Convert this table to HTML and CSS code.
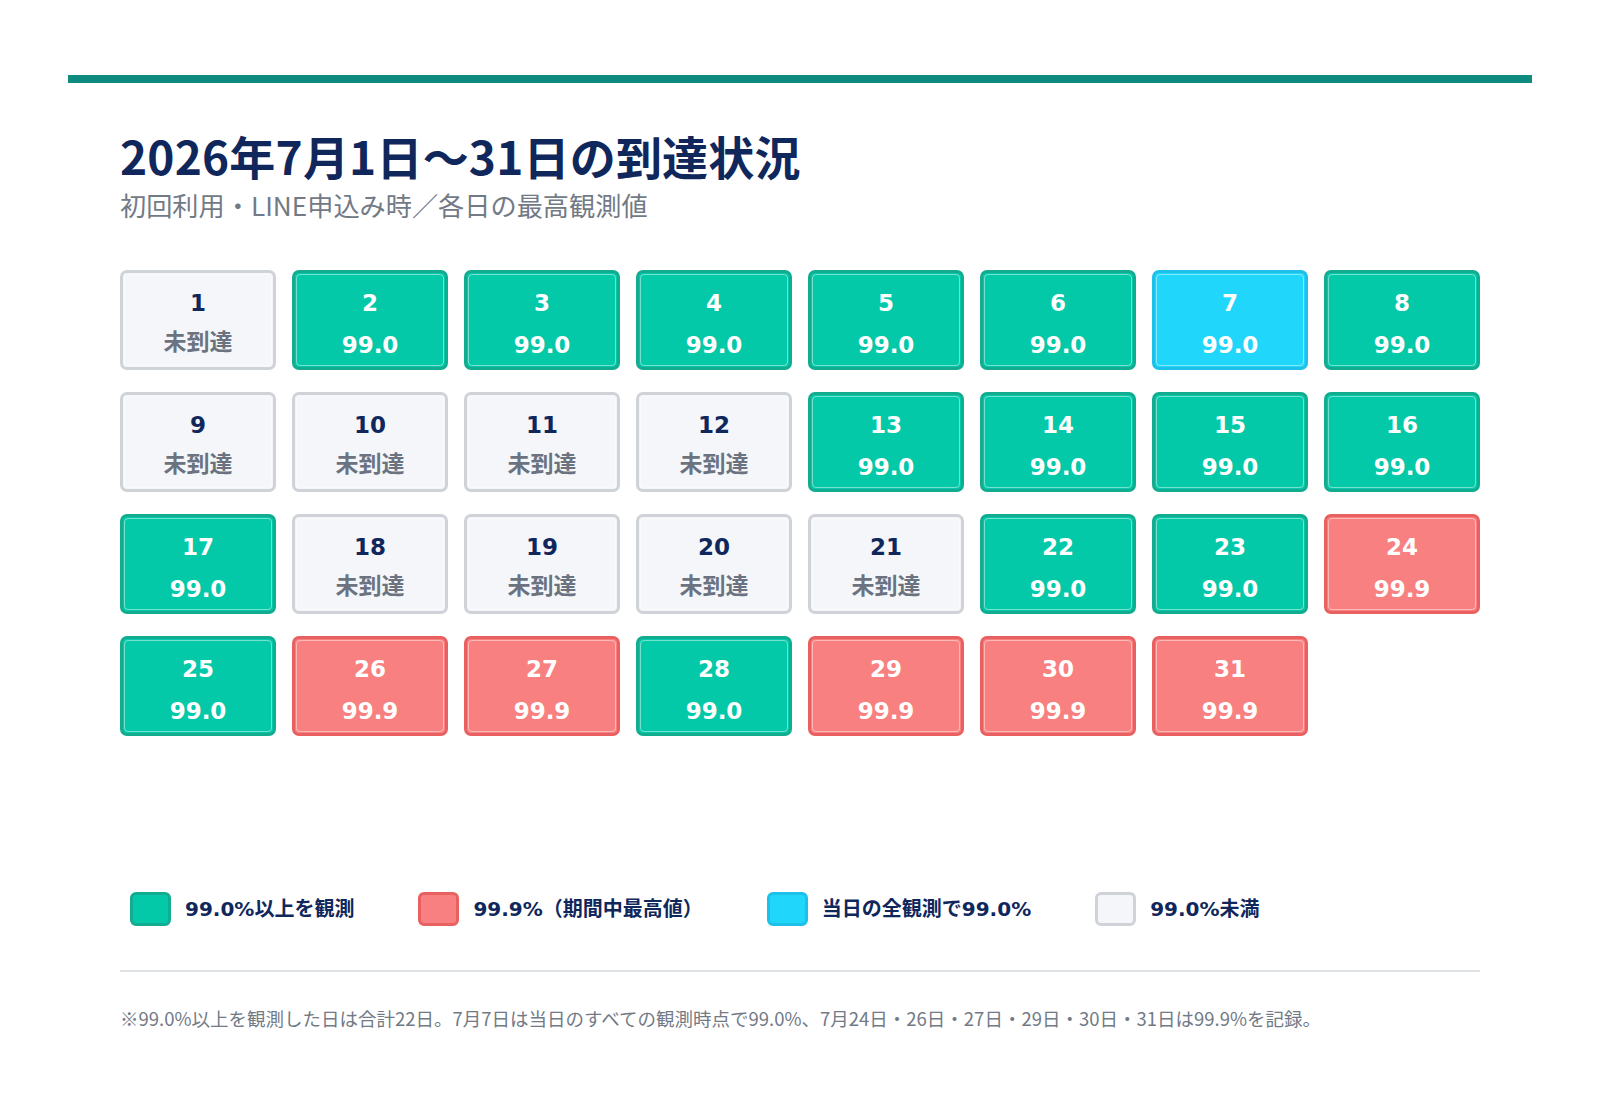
FILE: index.html
```html
<!DOCTYPE html>
<html lang="ja">
<head>
<meta charset="utf-8">
<title>2026年7月1日〜31日の到達状況</title>
<link rel="stylesheet" href="styles.css">
</head>
<body>
<div class="page">
  <div class="bar"></div>
  <div class="content">
    <h1 class="title">2026年7月1日〜31日の到達状況</h1>
    <p class="subtitle">初回利用・LINE申込み時／各日の最高観測値</p>

    <div class="grid">
      <div class="card none"><span class="day">1</span><span class="val">未到達</span></div>
      <div class="card ok"><span class="day">2</span><span class="val">99.0</span></div>
      <div class="card ok"><span class="day">3</span><span class="val">99.0</span></div>
      <div class="card ok"><span class="day">4</span><span class="val">99.0</span></div>
      <div class="card ok"><span class="day">5</span><span class="val">99.0</span></div>
      <div class="card ok"><span class="day">6</span><span class="val">99.0</span></div>
      <div class="card all"><span class="day">7</span><span class="val">99.0</span></div>
      <div class="card ok"><span class="day">8</span><span class="val">99.0</span></div>

      <div class="card none"><span class="day">9</span><span class="val">未到達</span></div>
      <div class="card none"><span class="day">10</span><span class="val">未到達</span></div>
      <div class="card none"><span class="day">11</span><span class="val">未到達</span></div>
      <div class="card none"><span class="day">12</span><span class="val">未到達</span></div>
      <div class="card ok"><span class="day">13</span><span class="val">99.0</span></div>
      <div class="card ok"><span class="day">14</span><span class="val">99.0</span></div>
      <div class="card ok"><span class="day">15</span><span class="val">99.0</span></div>
      <div class="card ok"><span class="day">16</span><span class="val">99.0</span></div>

      <div class="card ok"><span class="day">17</span><span class="val">99.0</span></div>
      <div class="card none"><span class="day">18</span><span class="val">未到達</span></div>
      <div class="card none"><span class="day">19</span><span class="val">未到達</span></div>
      <div class="card none"><span class="day">20</span><span class="val">未到達</span></div>
      <div class="card none"><span class="day">21</span><span class="val">未到達</span></div>
      <div class="card ok"><span class="day">22</span><span class="val">99.0</span></div>
      <div class="card ok"><span class="day">23</span><span class="val">99.0</span></div>
      <div class="card max"><span class="day">24</span><span class="val">99.9</span></div>

      <div class="card ok"><span class="day">25</span><span class="val">99.0</span></div>
      <div class="card max"><span class="day">26</span><span class="val">99.9</span></div>
      <div class="card max"><span class="day">27</span><span class="val">99.9</span></div>
      <div class="card ok"><span class="day">28</span><span class="val">99.0</span></div>
      <div class="card max"><span class="day">29</span><span class="val">99.9</span></div>
      <div class="card max"><span class="day">30</span><span class="val">99.9</span></div>
      <div class="card max"><span class="day">31</span><span class="val">99.9</span></div>
    </div>

    <div class="legend">
      <div class="legend-item"><span class="swatch ok"></span><span class="legend-text">99.0%以上を観測</span></div>
      <div class="legend-item"><span class="swatch max"></span><span class="legend-text">99.9%（期間中最高値）</span></div>
      <div class="legend-item"><span class="swatch all"></span><span class="legend-text">当日の全観測で99.0%</span></div>
      <div class="legend-item"><span class="swatch none"></span><span class="legend-text">99.0%未満</span></div>
    </div>

    <div class="divider"></div>

    <p class="note">※99.0%以上を観測した日は合計22日。7月7日は当日のすべての観測時点で99.0%、7月24日・26日・27日・29日・30日・31日は99.9%を記録。</p>
  </div>
</div>
</body>
</html>
```

FILE: styles.css
```css
html, body {
  margin: 0;
  padding: 0;
  background: #ffffff;
}

body {
  font-family: "Noto Sans CJK JP", "Noto Sans", sans-serif;
  color: #10275c;
}

.page {
  width: 1464px;
  margin: 0 auto;
  padding-top: 75px;
}

.bar {
  height: 8px;
  background: #0f8a7e;
}

.content {
  padding: 0 52px;
}

.title {
  margin: 44px 0 0;
  font-size: 46px;
  line-height: 56px;
  font-weight: 700;
  letter-spacing: 0.2px;
  color: #10275c;
  font-family: "Noto Sans CJK JP", sans-serif;
}

.subtitle {
  margin: 5px 0 0;
  font-size: 26.2px;
  line-height: 34px;
  font-weight: 400;
  color: #727a86;
  font-family: "Noto Sans CJK JP", sans-serif;
}

.grid {
  margin-top: 48px;
  display: grid;
  grid-template-columns: repeat(8, 1fr);
  column-gap: 16px;
  row-gap: 22px;
}

.card {
  position: relative;
  box-sizing: border-box;
  height: 100px;
  border-width: 3px;
  border-style: solid;
  border-radius: 7px;
  display: flex;
  flex-direction: column;
  align-items: center;
  justify-content: center;
  gap: 14px;
  padding-top: 7px;
  font-family: "DejaVu Sans", "Noto Sans CJK JP", sans-serif;
  font-weight: 700;
  color: #ffffff;
}

.card::after {
  content: "";
  position: absolute;
  inset: 1px;
  border: 1px solid rgba(255, 255, 255, 0.45);
  border-radius: 4px;
  pointer-events: none;
}

.day,
.val {
  font-size: 23px;
  line-height: 28px;
}

.ok {
  background: #03c9a8;
  border-color: #12ad90;
}

.max {
  background: #f88080;
  border-color: #e86060;
}

.all {
  background: #20d6fa;
  border-color: #1cc0e8;
}

.none {
  background: #f4f6f9;
  border-color: #cfd3d8;
}

.card.none .day {
  color: #10275c;
}

.card.none .val {
  position: relative;
  top: -5px;
  color: #6b7280;
  font-family: "Noto Sans CJK JP", sans-serif;
  font-size: 23px;
}

.legend {
  margin-top: 156px;
  padding-left: 10px;
  display: flex;
  align-items: center;
  gap: 64px;
}

.legend-item {
  display: flex;
  align-items: center;
  gap: 14px;
}

.swatch {
  box-sizing: border-box;
  width: 41px;
  height: 34px;
  border-width: 3px;
  border-style: solid;
  border-radius: 6px;
}

.legend-text {
  font-family: "DejaVu Sans", "Noto Sans CJK JP", sans-serif;
  font-weight: 700;
  font-size: 20px;
  line-height: 28px;
  color: #10275c;
}

.divider {
  margin-top: 44px;
  height: 2px;
  background: #dfe2e6;
}

.note {
  margin: 34px 0 0;
  font-size: 18.5px;
  line-height: 24px;
  color: #727a86;
  font-family: "Noto Sans CJK JP", sans-serif;
}
```
